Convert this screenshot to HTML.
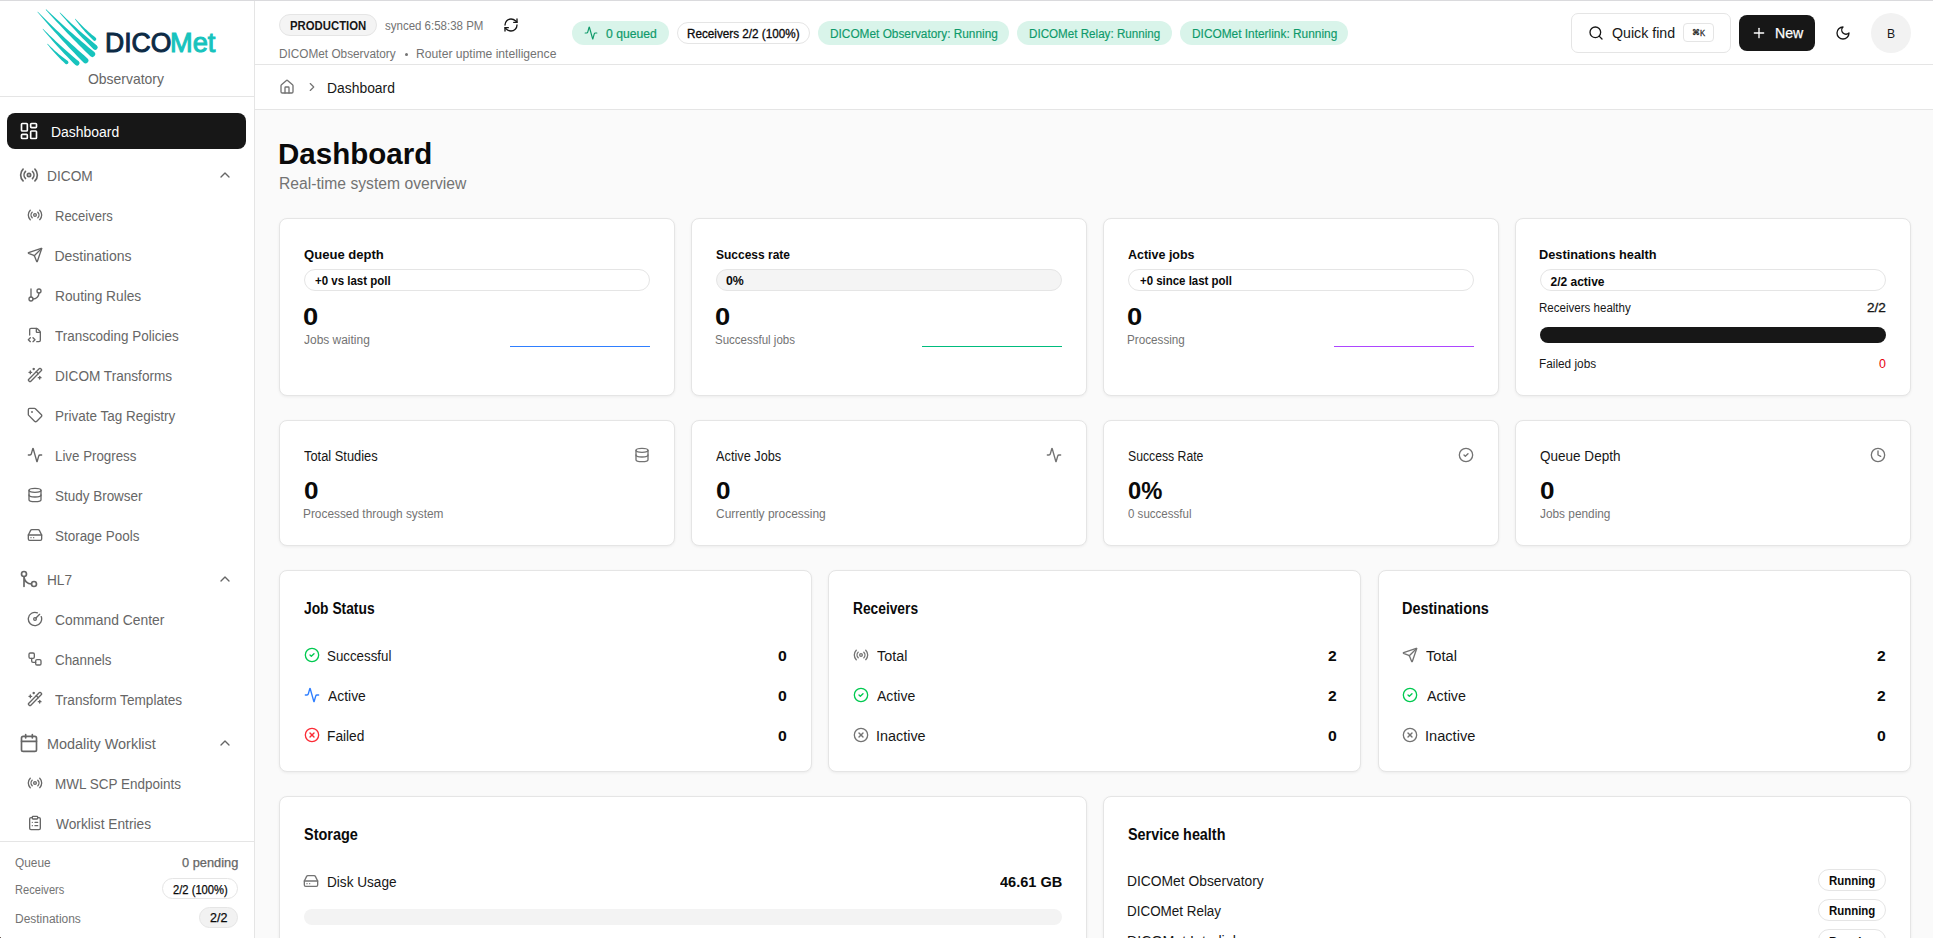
<!DOCTYPE html>
<html><head><meta charset="utf-8"><title>Dashboard</title><style>
*{box-sizing:border-box;margin:0;padding:0}
html,body{width:1933px;height:938px;overflow:hidden}
body{font-family:"Liberation Sans",sans-serif;background:#fafafa;color:#0a0a0a;position:relative}
.t{position:absolute;white-space:nowrap;line-height:1;transform-origin:0 0}
.b{position:absolute}
svg.i{position:absolute;fill:none;stroke:currentColor;stroke-linecap:round;stroke-linejoin:round;display:block}
</style></head><body>
<div class="b" style="left:0px;top:0px;width:255px;height:938px;background:#fff;border-right:1px solid #e5e5e5"></div>
<div class="b" style="left:0px;top:96px;width:254px;height:1px;background:#e5e5e5"></div>
<div class="b" style="left:0px;top:841px;width:254px;height:1px;background:#e5e5e5"></div>
<div class="b" style="left:255px;top:0px;width:1678px;height:65px;background:#fff;border-bottom:1px solid #e5e5e5"></div>
<div class="b" style="left:255px;top:65px;width:1678px;height:45px;background:#fff;border-bottom:1px solid #e5e5e5"></div>
<div class="b" style="left:0px;top:0px;width:1933px;height:1px;background:#dadadd;z-index:5"></div>
<svg style="position:absolute;left:0;top:0" width="110" height="70" viewBox="0 0 110 70"><path fill="#17c3bd" d="M45.72 9.67L48.41 12.69L51.12 15.68L53.84 18.67L56.57 21.65L59.32 24.61L62.08 27.56L64.85 30.49L67.64 33.42L70.45 36.33L73.26 39.23L76.10 42.12L78.94 44.99L81.80 47.85L84.68 50.70L87.57 53.54L90.47 56.36A2.90 2.90 0 0 0 94.33 52.04L94.33 52.04L91.23 49.48L88.13 46.90L85.05 44.31L81.98 41.71L78.93 39.09L75.88 36.46L72.85 33.81L69.83 31.15L66.82 28.47L63.82 25.78L60.83 23.07L57.86 20.35L54.90 17.62L51.94 14.87L49.01 12.11L46.08 9.33ZM37.42 12.07L40.19 15.32L42.98 18.56L45.78 21.78L48.59 24.99L51.42 28.20L54.27 31.39L57.13 34.56L60.00 37.73L62.89 40.88L65.79 44.02L68.71 47.15L71.64 50.26L74.58 53.37L77.54 56.46L80.52 59.54L83.51 62.61A2.90 2.90 0 0 0 87.49 58.39L87.49 58.39L84.29 55.58L81.11 52.76L77.93 49.92L74.77 47.07L71.62 44.20L68.48 41.32L65.36 38.42L62.24 35.52L59.14 32.59L56.06 29.65L52.98 26.70L49.92 23.74L46.86 20.76L43.83 17.76L40.80 14.75L37.78 11.73ZM59.62 12.77L61.63 15.14L63.66 17.49L65.70 19.83L67.75 22.16L69.82 24.48L71.91 26.79L74.00 29.08L76.12 31.36L78.24 33.63L80.39 35.89L82.54 38.13L84.71 40.36L86.90 42.58L89.10 44.79L91.31 46.98L93.54 49.17A2.50 2.50 0 0 0 96.86 45.43L96.86 45.43L94.47 43.48L92.09 41.51L89.72 39.53L87.36 37.53L85.01 35.52L82.68 33.49L80.35 31.45L78.04 29.40L75.74 27.33L73.46 25.24L71.18 23.14L68.92 21.03L66.67 18.90L64.43 16.76L62.20 14.60L59.98 12.43ZM74.91 19.06L75.94 20.48L77.00 21.88L78.07 23.28L79.15 24.66L80.25 26.03L81.36 27.39L82.49 28.74L83.63 30.08L84.79 31.40L85.96 32.72L87.15 34.02L88.35 35.31L89.57 36.59L90.80 37.86L92.05 39.11L93.32 40.36A1.80 1.80 0 0 0 95.68 37.64L95.68 37.64L94.32 36.57L92.97 35.48L91.63 34.38L90.30 33.26L88.98 32.13L87.68 30.99L86.39 29.83L85.11 28.65L83.84 27.47L82.58 26.26L81.34 25.05L80.10 23.81L78.88 22.57L77.67 21.31L76.48 20.03L75.29 18.74ZM42.61 29.07L44.56 31.41L46.51 33.73L48.48 36.05L50.47 38.35L52.47 40.64L54.48 42.92L56.51 45.19L58.55 47.45L60.61 49.69L62.68 51.92L64.77 54.14L66.87 56.35L68.99 58.54L71.12 60.72L73.26 62.89L75.42 65.05A2.50 2.50 0 0 0 78.78 61.35L78.78 61.35L76.45 59.42L74.14 57.47L71.83 55.51L69.54 53.54L67.26 51.55L65.00 49.55L62.74 47.53L60.50 45.50L58.27 43.46L56.05 41.40L53.84 39.32L51.65 37.23L49.46 35.13L47.29 33.01L45.13 30.88L42.99 28.73ZM47.11 43.96L48.16 45.30L49.21 46.62L50.29 47.94L51.38 49.24L52.48 50.53L53.59 51.80L54.73 53.07L55.87 54.32L57.03 55.56L58.21 56.79L59.40 58.00L60.60 59.21L61.82 60.40L63.06 61.58L64.31 62.75L65.57 63.90A1.80 1.80 0 0 0 67.83 61.10L67.83 61.10L66.47 60.12L65.13 59.12L63.79 58.11L62.47 57.09L61.16 56.05L59.86 55.00L58.57 53.93L57.29 52.84L56.03 51.75L54.77 50.63L53.53 49.50L52.30 48.36L51.08 47.20L49.87 46.03L48.67 44.84L47.49 43.64Z"/></svg>
<div class="t" style="left:105.18px;top:30.00px;font-size:27px;color:#0c2a45;transform:scaleX(0.9830);-webkit-text-stroke:1.0px #0c2a45;">DICO</div>
<div class="t" style="left:170.42px;top:30.00px;font-size:27px;color:#17c3bd;transform:scaleX(1.0080);-webkit-text-stroke:1.0px #17c3bd;">Met</div>
<div class="t" style="left:88.17px;top:72.00px;font-size:14.4px;color:#666666;transform:scaleX(0.9693);">Observatory</div>
<div class="b" style="left:7px;top:113px;width:239px;height:36px;background:#171717;border-radius:8px"></div>
<svg class="i" style="left:18.5px;top:121px;color:#fff" width="20" height="20" viewBox="0 0 24 24" stroke-width="2"><rect width="7" height="9" x="3" y="3" rx="1"/><rect width="7" height="5" x="14" y="3" rx="1"/><rect width="7" height="9" x="14" y="12" rx="1"/><rect width="7" height="5" x="3" y="16" rx="1"/></svg>
<div class="t" style="left:50.68px;top:125.00px;font-size:14px;color:#fff;transform:scaleX(0.9965);">Dashboard</div>
<svg class="i" style="left:19px;top:164.8px;color:#666666" width="20" height="20" viewBox="0 0 24 24" stroke-width="2"><path d="M4.9 19.1C1 15.2 1 8.8 4.9 4.9"/><path d="M7.8 16.2c-2.3-2.3-2.3-6.1 0-8.5"/><circle cx="12" cy="12" r="2"/><path d="M16.2 7.8c2.3 2.3 2.3 6.1 0 8.5"/><path d="M19.1 4.9C23 8.8 23 15.1 19.1 19"/></svg>
<div class="t" style="left:46.60px;top:169.00px;font-size:14px;color:#666666;transform:scaleX(0.9802);">DICOM</div>
<svg class="i" style="left:217px;top:167.0px;color:#666666" width="16" height="16" viewBox="0 0 24 24" stroke-width="2"><path d="m18 15-6-6-6 6"/></svg>
<svg class="i" style="left:19px;top:569.0px;color:#666666" width="20" height="20" viewBox="0 0 24 24" stroke-width="2"><circle cx="18" cy="18" r="3"/><circle cx="6" cy="6" r="3"/><path d="M6 21V9a9 9 0 0 0 9 9"/></svg>
<div class="t" style="left:46.61px;top:573.00px;font-size:14px;color:#666666;transform:scaleX(0.9761);">HL7</div>
<svg class="i" style="left:217px;top:571.2px;color:#666666" width="16" height="16" viewBox="0 0 24 24" stroke-width="2"><path d="m18 15-6-6-6 6"/></svg>
<svg class="i" style="left:19px;top:732.9px;color:#666666" width="20" height="20" viewBox="0 0 24 24" stroke-width="2"><path d="M8 2v4"/><path d="M16 2v4"/><rect width="18" height="18" x="3" y="4" rx="2"/><path d="M3 10h18"/></svg>
<div class="t" style="left:46.55px;top:737.00px;font-size:14px;color:#666666;transform:scaleX(1.0307);">Modality Worklist</div>
<svg class="i" style="left:217px;top:735.1px;color:#666666" width="16" height="16" viewBox="0 0 24 24" stroke-width="2"><path d="m18 15-6-6-6 6"/></svg>
<svg class="i" style="left:26.8px;top:206.89999999999998px;color:#666666" width="16" height="16" viewBox="0 0 24 24" stroke-width="2"><path d="M4.9 19.1C1 15.2 1 8.8 4.9 4.9"/><path d="M7.8 16.2c-2.3-2.3-2.3-6.1 0-8.5"/><circle cx="12" cy="12" r="2"/><path d="M16.2 7.8c2.3 2.3 2.3 6.1 0 8.5"/><path d="M19.1 4.9C23 8.8 23 15.1 19.1 19"/></svg>
<div class="t" style="left:54.56px;top:209.00px;font-size:14px;color:#666666;transform:scaleX(0.9287);">Receivers</div>
<svg class="i" style="left:26.8px;top:246.89999999999998px;color:#666666" width="16" height="16" viewBox="0 0 24 24" stroke-width="2"><path d="M14.536 21.686a.5.5 0 0 0 .937-.024l6.5-19a.496.496 0 0 0-.635-.635l-19 6.5a.5.5 0 0 0-.024.937l7.93 3.18a2 2 0 0 1 1.112 1.11z"/><path d="m21.854 2.147-10.94 10.939"/></svg>
<div class="t" style="left:54.48px;top:249.00px;font-size:14px;color:#666666;">Destinations</div>
<svg class="i" style="left:26.8px;top:286.9px;color:#666666" width="16" height="16" viewBox="0 0 24 24" stroke-width="2"><line x1="6" x2="6" y1="3" y2="15"/><circle cx="18" cy="6" r="3"/><circle cx="6" cy="18" r="3"/><path d="M18 9a9 9 0 0 1-9 9"/></svg>
<div class="t" style="left:54.50px;top:289.00px;font-size:14px;color:#666666;transform:scaleX(0.9802);">Routing Rules</div>
<svg class="i" style="left:26.8px;top:326.9px;color:#666666" width="16" height="16" viewBox="0 0 24 24" stroke-width="2"><path d="M4 12.15V4a2 2 0 0 1 2-2h8a2.4 2.4 0 0 1 1.706.706l3.588 3.588A2.4 2.4 0 0 1 20 8v12a2 2 0 0 1-2 2h-3.35"/><path d="M14 2v5a1 1 0 0 0 1 1h5"/><path d="m5 16-3 3 3 3"/><path d="m9 22 3-3-3-3"/></svg>
<div class="t" style="left:55.33px;top:329.00px;font-size:14px;color:#666666;transform:scaleX(0.9610);">Transcoding Policies</div>
<svg class="i" style="left:26.8px;top:366.9px;color:#666666" width="16" height="16" viewBox="0 0 24 24" stroke-width="2"><path d="m21.64 3.64-1.28-1.28a1.21 1.21 0 0 0-1.72 0L2.36 18.64a1.21 1.21 0 0 0 0 1.72l1.28 1.28a1.2 1.2 0 0 0 1.72 0L21.64 5.36a1.2 1.2 0 0 0 0-1.72"/><path d="m14 7 3 3"/><path d="M5 6v4"/><path d="M19 14v4"/><path d="M10 2v2"/><path d="M7 8H3"/><path d="M21 16h-4"/><path d="M11 3H9"/></svg>
<div class="t" style="left:54.51px;top:369.00px;font-size:14px;color:#666666;transform:scaleX(0.9712);">DICOM Transforms</div>
<svg class="i" style="left:26.8px;top:406.9px;color:#666666" width="16" height="16" viewBox="0 0 24 24" stroke-width="2"><path d="M12.586 2.586A2 2 0 0 0 11.172 2H4a2 2 0 0 0-2 2v7.172a2 2 0 0 0 .586 1.414l8.704 8.704a2.426 2.426 0 0 0 3.42 0l6.58-6.58a2.426 2.426 0 0 0 0-3.42z"/><circle cx="7.5" cy="7.5" r=".5" fill="currentColor"/></svg>
<div class="t" style="left:54.52px;top:409.00px;font-size:14px;color:#666666;transform:scaleX(0.9626);">Private Tag Registry</div>
<svg class="i" style="left:26.8px;top:446.9px;color:#666666" width="16" height="16" viewBox="0 0 24 24" stroke-width="2"><path d="M22 12h-2.48a2 2 0 0 0-1.93 1.46l-2.35 8.36a.25.25 0 0 1-.48 0L9.24 2.18a.25.25 0 0 0-.48 0l-2.35 8.36A2 2 0 0 1 4.49 12H2"/></svg>
<div class="t" style="left:54.53px;top:449.00px;font-size:14px;color:#666666;transform:scaleX(0.9512);">Live Progress</div>
<svg class="i" style="left:26.8px;top:486.9px;color:#666666" width="16" height="16" viewBox="0 0 24 24" stroke-width="2"><ellipse cx="12" cy="5" rx="9" ry="3"/><path d="M3 5V19A9 3 0 0 0 21 19V5"/><path d="M3 12A9 3 0 0 0 21 12"/></svg>
<div class="t" style="left:54.99px;top:489.00px;font-size:14px;color:#666666;transform:scaleX(0.9616);">Study Browser</div>
<svg class="i" style="left:26.8px;top:526.9000000000001px;color:#666666" width="16" height="16" viewBox="0 0 24 24" stroke-width="2"><line x1="22" x2="2" y1="12" y2="12"/><path d="M5.45 5.11 2 12v6a2 2 0 0 0 2 2h16a2 2 0 0 0 2-2v-6l-3.45-6.89A2 2 0 0 0 16.76 4H7.24a2 2 0 0 0-1.79 1.11z"/><line x1="6" x2="6.01" y1="16" y2="16"/><line x1="10" x2="10.01" y1="16" y2="16"/></svg>
<div class="t" style="left:55.00px;top:529.00px;font-size:14px;color:#666666;transform:scaleX(0.9597);">Storage Pools</div>
<svg class="i" style="left:26.8px;top:611.0px;color:#666666" width="16" height="16" viewBox="0 0 24 24" stroke-width="2"><path d="M15.6 2.7a10 10 0 1 0 5.7 5.7"/><circle cx="12" cy="12" r="2"/><path d="M13.4 10.6 19 5"/></svg>
<div class="t" style="left:54.91px;top:613.00px;font-size:14px;color:#666666;transform:scaleX(0.9895);">Command Center</div>
<svg class="i" style="left:26.8px;top:651.0px;color:#666666" width="16" height="16" viewBox="0 0 24 24" stroke-width="2"><rect width="8" height="8" x="3" y="3" rx="2"/><path d="M7 11v4a2 2 0 0 0 2 2h4"/><rect width="8" height="8" x="13" y="13" rx="2"/></svg>
<div class="t" style="left:54.93px;top:653.00px;font-size:14px;color:#666666;transform:scaleX(0.9558);">Channels</div>
<svg class="i" style="left:26.8px;top:691.0px;color:#666666" width="16" height="16" viewBox="0 0 24 24" stroke-width="2"><path d="m21.64 3.64-1.28-1.28a1.21 1.21 0 0 0-1.72 0L2.36 18.64a1.21 1.21 0 0 0 0 1.72l1.28 1.28a1.2 1.2 0 0 0 1.72 0L21.64 5.36a1.2 1.2 0 0 0 0-1.72"/><path d="m14 7 3 3"/><path d="M5 6v4"/><path d="M19 14v4"/><path d="M10 2v2"/><path d="M7 8H3"/><path d="M21 16h-4"/><path d="M11 3H9"/></svg>
<div class="t" style="left:55.33px;top:693.00px;font-size:14px;color:#666666;transform:scaleX(0.9729);">Transform Templates</div>
<svg class="i" style="left:26.8px;top:774.9000000000001px;color:#666666" width="16" height="16" viewBox="0 0 24 24" stroke-width="2"><path d="M4.9 19.1C1 15.2 1 8.8 4.9 4.9"/><path d="M7.8 16.2c-2.3-2.3-2.3-6.1 0-8.5"/><circle cx="12" cy="12" r="2"/><path d="M16.2 7.8c2.3 2.3 2.3 6.1 0 8.5"/><path d="M19.1 4.9C23 8.8 23 15.1 19.1 19"/></svg>
<div class="t" style="left:54.52px;top:777.00px;font-size:14px;color:#666666;transform:scaleX(0.9632);">MWL SCP Endpoints</div>
<svg class="i" style="left:26.8px;top:814.8000000000001px;color:#666666" width="16" height="16" viewBox="0 0 24 24" stroke-width="2"><rect width="8" height="4" x="8" y="2" rx="1" ry="1"/><path d="M16 4h2a2 2 0 0 1 2 2v14a2 2 0 0 1-2 2H6a2 2 0 0 1-2-2V6a2 2 0 0 1 2-2h2"/><path d="M12 11h4"/><path d="M12 16h4"/><path d="M8 11h.01"/><path d="M8 16h.01"/></svg>
<div class="t" style="left:55.53px;top:817.00px;font-size:14px;color:#666666;transform:scaleX(0.9794);">Worklist Entries</div>
<div class="t" style="left:14.97px;top:857.00px;font-size:12px;color:#737373;transform:scaleX(0.9880);">Queue</div>
<div class="t" style="left:182.19px;top:857.00px;font-size:12px;color:#666666;transform:scaleX(1.0677);-webkit-text-stroke:0.25px #666666;">0 pending</div>
<div class="t" style="left:14.61px;top:884.00px;font-size:12px;color:#737373;transform:scaleX(0.9238);">Receivers</div>
<div class="b" style="left:162px;top:878px;width:76px;height:21px;border:1px solid #e5e5e5;border-radius:999px;background:#fff"></div>
<div class="t" style="left:172.64px;top:884.00px;font-size:12px;color:#0a0a0a;transform:scaleX(0.9327);-webkit-text-stroke:0.25px #0a0a0a;">2/2 (100%)</div>
<div class="t" style="left:14.54px;top:913.00px;font-size:12px;color:#737373;transform:scaleX(0.9972);">Destinations</div>
<div class="b" style="left:199px;top:907px;width:39px;height:21px;border:1px solid #e5e5e5;border-radius:999px;background:#f2f2f2"></div>
<div class="t" style="left:209.58px;top:912.00px;font-size:12px;color:#0a0a0a;transform:scaleX(1.0401);-webkit-text-stroke:0.25px #0a0a0a;">2/2</div>
<div class="b" style="left:279px;top:14px;width:98px;height:22px;background:#f4f4f4;border:1px solid #e5e5e5;border-radius:999px"></div>
<div class="t" style="left:289.86px;top:20.00px;font-size:12px;color:#171717;font-weight:bold;transform:scaleX(0.9459);">PRODUCTION</div>
<div class="t" style="left:385.46px;top:20.00px;font-size:12px;color:#737373;transform:scaleX(0.9576);">synced 6:58:38 PM</div>
<svg class="i" style="left:503.4px;top:16.7px;color:#171717" width="16" height="16" viewBox="0 0 24 24" stroke-width="2"><path d="M3 12a9 9 0 0 1 9-9 9.75 9.75 0 0 1 6.74 2.74L21 8"/><path d="M21 3v5h-5"/><path d="M21 12a9 9 0 0 1-9 9 9.75 9.75 0 0 1-6.74-2.74L3 16"/><path d="M8 16H3v5"/></svg>
<div class="t" style="left:278.76px;top:48.00px;font-size:12px;color:#737373;transform:scaleX(0.9825);">DICOMet Observatory</div>
<div class="b" style="left:405px;top:52.7px;width:3.2px;height:3.2px;background:#737373;border-radius:50%"></div>
<div class="t" style="left:416.13px;top:48.00px;font-size:12px;color:#737373;transform:scaleX(1.0122);">Router uptime intelligence</div>
<div class="b" style="left:572px;top:21px;width:97px;height:24px;background:#d9f4ea;border-radius:999px"></div>
<svg class="i" style="left:583.5px;top:26px;color:#0f9a6a" width="14" height="14" viewBox="0 0 24 24" stroke-width="2"><path d="M22 12h-2.48a2 2 0 0 0-1.93 1.46l-2.35 8.36a.25.25 0 0 1-.48 0L9.24 2.18a.25.25 0 0 0-.48 0l-2.35 8.36A2 2 0 0 1 4.49 12H2"/></svg>
<div class="t" style="left:606.31px;top:28.00px;font-size:12px;color:#0f9a6a;transform:scaleX(1.0127);-webkit-text-stroke:0.2px #0f9a6a;">0 queued</div>
<div class="b" style="left:677px;top:22px;width:133px;height:22px;background:#fff;border:1px solid #e5e5e5;border-radius:999px"></div>
<div class="t" style="left:686.86px;top:28.00px;font-size:12px;color:#0a0a0a;transform:scaleX(0.9759);-webkit-text-stroke:0.3px #0a0a0a;">Receivers 2/2 (100%)</div>
<div class="b" style="left:818px;top:21px;width:191px;height:24px;background:#d9f4ea;border-radius:999px"></div>
<div class="t" style="left:830.05px;top:28.00px;font-size:12px;color:#0f9a6a;transform:scaleX(0.9869);-webkit-text-stroke:0.15px #0f9a6a;">DICOMet Observatory: Running</div>
<div class="b" style="left:1017.3px;top:21px;width:154.4000000000001px;height:24px;background:#d9f4ea;border-radius:999px"></div>
<div class="t" style="left:1029.37px;top:28.00px;font-size:12px;color:#0f9a6a;transform:scaleX(0.9692);-webkit-text-stroke:0.15px #0f9a6a;">DICOMet Relay: Running</div>
<div class="b" style="left:1180px;top:21px;width:168.4000000000001px;height:24px;background:#d9f4ea;border-radius:999px"></div>
<div class="t" style="left:1192.05px;top:28.00px;font-size:12px;color:#0f9a6a;transform:scaleX(0.9899);-webkit-text-stroke:0.15px #0f9a6a;">DICOMet Interlink: Running</div>
<div class="b" style="left:1571px;top:13px;width:160px;height:40px;background:#fff;border:1px solid #e5e5e5;border-radius:7px"></div>
<svg class="i" style="left:1587.9px;top:24.8px;color:#171717" width="16" height="16" viewBox="0 0 24 24" stroke-width="2"><circle cx="11" cy="11" r="8"/><path d="m21 21-4.3-4.3"/></svg>
<div class="t" style="left:1611.96px;top:26.00px;font-size:14px;color:#171717;transform:scaleX(1.0133);">Quick find</div>
<div class="b" style="left:1683px;top:23px;width:31px;height:19px;background:#fff;border:1px solid #e5e5e5;border-radius:4px"></div>
<div class="t" style="left:1692.3px;top:28.6px;font-size:7.6px;color:#262626;font-weight:bold">⌘</div>
<div class="t" style="left:1700.19px;top:28.00px;font-size:9.5px;color:#262626;transform:scaleX(0.8055);-webkit-text-stroke:0.3px #262626;">K</div>
<div class="b" style="left:1739px;top:15px;width:76px;height:36px;background:#171717;border-radius:8px"></div>
<svg class="i" style="left:1750.9px;top:25px;color:#fff" width="16" height="16" viewBox="0 0 24 24" stroke-width="2"><path d="M5 12h14"/><path d="M12 5v14"/></svg>
<div class="t" style="left:1774.67px;top:26.00px;font-size:14px;color:#fff;transform:scaleX(1.0093);-webkit-text-stroke:0.25px #fff;">New</div>
<svg class="i" style="left:1834.7px;top:25px;color:#171717" width="16" height="16" viewBox="0 0 24 24" stroke-width="2"><path d="M12 3a6 6 0 0 0 9 9 9 9 0 1 1-9-9Z"/></svg>
<div class="b" style="left:1871px;top:13px;width:40px;height:40px;background:#f2f2f2;border-radius:50%"></div>
<div class="t" style="left:1886.73px;top:27.00px;font-size:13.5px;color:#171717;transform:scaleX(0.9000);">B</div>
<svg class="i" style="left:279.2px;top:78.9px;color:#737373" width="16" height="16" viewBox="0 0 24 24" stroke-width="2"><path d="M15 21v-8a1 1 0 0 0-1-1h-4a1 1 0 0 0-1 1v8"/><path d="M3 10a2 2 0 0 1 .709-1.528l7-5.999a2 2 0 0 1 2.582 0l7 5.999A2 2 0 0 1 21 10v9a2 2 0 0 1-2 2H5a2 2 0 0 1-2-2z"/></svg>
<svg class="i" style="left:304.6px;top:80.2px;color:#737373" width="14" height="14" viewBox="0 0 24 24" stroke-width="2"><path d="m9 18 6-6-6-6"/></svg>
<div class="t" style="left:326.69px;top:81.00px;font-size:14px;color:#171717;transform:scaleX(0.9920);">Dashboard</div>
<div class="t" style="left:278.38px;top:139.00px;font-size:30px;color:#0a0a0a;font-weight:bold;transform:scaleX(0.9843);">Dashboard</div>
<div class="t" style="left:278.75px;top:176.00px;font-size:16px;color:#737373;transform:scaleX(0.9799);">Real-time system overview</div>
<div class="b" style="left:279px;top:218px;width:396px;height:178px;background:#fff;border:1px solid #e5e5e5;border-radius:8px;box-shadow:0 1px 3px rgba(0,0,0,.06)"></div>
<div class="b" style="left:691px;top:218px;width:396px;height:178px;background:#fff;border:1px solid #e5e5e5;border-radius:8px;box-shadow:0 1px 3px rgba(0,0,0,.06)"></div>
<div class="b" style="left:1103px;top:218px;width:396px;height:178px;background:#fff;border:1px solid #e5e5e5;border-radius:8px;box-shadow:0 1px 3px rgba(0,0,0,.06)"></div>
<div class="b" style="left:1515px;top:218px;width:396px;height:178px;background:#fff;border:1px solid #e5e5e5;border-radius:8px;box-shadow:0 1px 3px rgba(0,0,0,.06)"></div>
<div class="t" style="left:303.88px;top:248.00px;font-size:13.5px;color:#0a0a0a;font-weight:bold;transform:scaleX(0.9675);">Queue depth</div>
<div class="b" style="left:304px;top:269px;width:346px;height:22px;border:1px solid #e5e5e5;border-radius:999px;background:#fff"></div>
<div class="t" style="left:315.44px;top:275.00px;font-size:12px;color:#0a0a0a;font-weight:bold;transform:scaleX(0.9562);">+0 vs last poll</div>
<div class="t" style="left:303.31px;top:305.00px;font-size:24px;color:#0a0a0a;font-weight:bold;transform:scaleX(1.1404);">0</div>
<div class="t" style="left:303.92px;top:334.00px;font-size:12px;color:#737373;transform:scaleX(0.9963);">Jobs waiting</div>
<div class="b" style="left:510px;top:345.5px;width:140px;height:1.5px;background:#2f7fff"></div>
<div class="t" style="left:715.64px;top:248.00px;font-size:13.5px;color:#0a0a0a;font-weight:bold;transform:scaleX(0.8882);">Success rate</div>
<div class="b" style="left:716px;top:269px;width:346px;height:22px;border:1px solid #e5e5e5;border-radius:999px;background:#f4f4f4"></div>
<div class="t" style="left:726.21px;top:275.00px;font-size:12px;color:#0a0a0a;font-weight:bold;transform:scaleX(1.0266);">0%</div>
<div class="t" style="left:715.31px;top:305.00px;font-size:24px;color:#0a0a0a;font-weight:bold;transform:scaleX(1.1404);">0</div>
<div class="t" style="left:715.48px;top:334.00px;font-size:12px;color:#737373;transform:scaleX(0.9595);">Successful jobs</div>
<div class="b" style="left:922px;top:345.5px;width:140px;height:1.5px;background:#00bc7d"></div>
<div class="t" style="left:1127.89px;top:248.00px;font-size:13.5px;color:#0a0a0a;font-weight:bold;transform:scaleX(0.9235);">Active jobs</div>
<div class="b" style="left:1128px;top:269px;width:346px;height:22px;border:1px solid #e5e5e5;border-radius:999px;background:#fff"></div>
<div class="t" style="left:1139.74px;top:275.00px;font-size:12px;color:#0a0a0a;font-weight:bold;transform:scaleX(0.9533);">+0 since last poll</div>
<div class="t" style="left:1127.31px;top:305.00px;font-size:24px;color:#0a0a0a;font-weight:bold;transform:scaleX(1.1404);">0</div>
<div class="t" style="left:1127.27px;top:334.00px;font-size:12px;color:#737373;transform:scaleX(0.9740);">Processing</div>
<div class="b" style="left:1334px;top:345.5px;width:140px;height:1.5px;background:#ad46ff"></div>
<div class="t" style="left:1539.37px;top:248.00px;font-size:13.5px;color:#0a0a0a;font-weight:bold;transform:scaleX(0.9442);">Destinations health</div>
<div class="b" style="left:1540px;top:269px;width:346px;height:22px;border:1px solid #e5e5e5;border-radius:999px;background:#fff"></div>
<div class="t" style="left:1550.48px;top:276.00px;font-size:12px;color:#0a0a0a;font-weight:bold;">2/2 active</div>
<div class="t" style="left:1539.28px;top:302.00px;font-size:12px;color:#171717;transform:scaleX(0.9621);">Receivers healthy</div>
<div class="t" style="left:1867.12px;top:302.00px;font-size:12px;color:#171717;transform:scaleX(1.1305);-webkit-text-stroke:0.3px #171717;">2/2</div>
<div class="b" style="left:1540px;top:327px;width:346px;height:16px;background:#171717;border-radius:999px"></div>
<div class="t" style="left:1539.25px;top:358.00px;font-size:12px;color:#171717;transform:scaleX(0.9852);">Failed jobs</div>
<div class="t" style="left:1878.90px;top:358.00px;font-size:12px;color:#e7000b;transform:scaleX(1.0351);">0</div>
<div class="b" style="left:279px;top:420px;width:396px;height:126px;background:#fff;border:1px solid #e5e5e5;border-radius:8px;box-shadow:0 1px 3px rgba(0,0,0,.06)"></div>
<div class="b" style="left:691px;top:420px;width:396px;height:126px;background:#fff;border:1px solid #e5e5e5;border-radius:8px;box-shadow:0 1px 3px rgba(0,0,0,.06)"></div>
<div class="b" style="left:1103px;top:420px;width:396px;height:126px;background:#fff;border:1px solid #e5e5e5;border-radius:8px;box-shadow:0 1px 3px rgba(0,0,0,.06)"></div>
<div class="b" style="left:1515px;top:420px;width:396px;height:126px;background:#fff;border:1px solid #e5e5e5;border-radius:8px;box-shadow:0 1px 3px rgba(0,0,0,.06)"></div>
<div class="t" style="left:304.04px;top:449.00px;font-size:14px;color:#171717;transform:scaleX(0.9196);">Total Studies</div>
<svg class="i" style="left:634px;top:446.5px;color:#737373" width="16" height="16" viewBox="0 0 24 24" stroke-width="2"><ellipse cx="12" cy="5" rx="9" ry="3"/><path d="M3 5V19A9 3 0 0 0 21 19V5"/><path d="M3 12A9 3 0 0 0 21 12"/></svg>
<div class="t" style="left:303.76px;top:479.00px;font-size:24px;color:#0a0a0a;font-weight:bold;transform:scaleX(1.0877);">0</div>
<div class="t" style="left:303.35px;top:508.00px;font-size:12px;color:#737373;transform:scaleX(0.9887);">Processed through system</div>
<div class="t" style="left:716.24px;top:449.00px;font-size:14px;color:#171717;transform:scaleX(0.9106);">Active Jobs</div>
<svg class="i" style="left:1046px;top:446.5px;color:#737373" width="16" height="16" viewBox="0 0 24 24" stroke-width="2"><path d="M22 12h-2.48a2 2 0 0 0-1.93 1.46l-2.35 8.36a.25.25 0 0 1-.48 0L9.24 2.18a.25.25 0 0 0-.48 0l-2.35 8.36A2 2 0 0 1 4.49 12H2"/></svg>
<div class="t" style="left:715.76px;top:479.00px;font-size:24px;color:#0a0a0a;font-weight:bold;transform:scaleX(1.0877);">0</div>
<div class="t" style="left:715.70px;top:508.00px;font-size:12px;color:#737373;transform:scaleX(0.9976);">Currently processing</div>
<div class="t" style="left:1127.75px;top:449.00px;font-size:14px;color:#171717;transform:scaleX(0.8729);">Success Rate</div>
<svg class="i" style="left:1458px;top:446.5px;color:#737373" width="16" height="16" viewBox="0 0 24 24" stroke-width="2"><circle cx="12" cy="12" r="10"/><path d="m9 12 2 2 4-4"/></svg>
<div class="t" style="left:1127.85px;top:479.00px;font-size:24px;color:#0a0a0a;font-weight:bold;transform:scaleX(0.9903);">0%</div>
<div class="t" style="left:1127.84px;top:508.00px;font-size:12px;color:#737373;transform:scaleX(0.9608);">0 successful</div>
<div class="t" style="left:1539.69px;top:449.00px;font-size:14px;color:#171717;transform:scaleX(0.9662);">Queue Depth</div>
<svg class="i" style="left:1870px;top:446.5px;color:#737373" width="16" height="16" viewBox="0 0 24 24" stroke-width="2"><circle cx="12" cy="12" r="10"/><polyline points="12 6 12 12 16 14"/></svg>
<div class="t" style="left:1539.76px;top:479.00px;font-size:24px;color:#0a0a0a;font-weight:bold;transform:scaleX(1.0877);">0</div>
<div class="t" style="left:1540.12px;top:508.00px;font-size:12px;color:#737373;transform:scaleX(0.9867);">Jobs pending</div>
<div class="b" style="left:279px;top:570px;width:533px;height:202px;background:#fff;border:1px solid #e5e5e5;border-radius:8px;box-shadow:0 1px 3px rgba(0,0,0,.06)"></div>
<div class="b" style="left:828.33px;top:570px;width:533px;height:202px;background:#fff;border:1px solid #e5e5e5;border-radius:8px;box-shadow:0 1px 3px rgba(0,0,0,.06)"></div>
<div class="b" style="left:1377.67px;top:570px;width:533px;height:202px;background:#fff;border:1px solid #e5e5e5;border-radius:8px;box-shadow:0 1px 3px rgba(0,0,0,.06)"></div>
<div class="t" style="left:304.29px;top:601.00px;font-size:16px;color:#0a0a0a;font-weight:bold;transform:scaleX(0.8630);">Job Status</div>
<svg class="i" style="left:303.5px;top:647.1999999999999px;color:#00c950" width="16" height="16" viewBox="0 0 24 24" stroke-width="2"><circle cx="12" cy="12" r="10"/><path d="m9 12 2 2 4-4"/></svg>
<div class="t" style="left:327.30px;top:649.00px;font-size:14px;color:#171717;transform:scaleX(0.9509);">Successful</div>
<div class="t" style="left:778.37px;top:649.00px;font-size:14px;color:#0a0a0a;font-weight:bold;transform:scaleX(1.1278);">0</div>
<svg class="i" style="left:303.5px;top:687.1999999999999px;color:#2f7fff" width="16" height="16" viewBox="0 0 24 24" stroke-width="2"><path d="M22 12h-2.48a2 2 0 0 0-1.93 1.46l-2.35 8.36a.25.25 0 0 1-.48 0L9.24 2.18a.25.25 0 0 0-.48 0l-2.35 8.36A2 2 0 0 1 4.49 12H2"/></svg>
<div class="t" style="left:327.83px;top:689.00px;font-size:14px;color:#171717;transform:scaleX(0.9925);">Active</div>
<div class="t" style="left:778.37px;top:689.00px;font-size:14px;color:#0a0a0a;font-weight:bold;transform:scaleX(1.1278);">0</div>
<svg class="i" style="left:303.5px;top:727.1999999999999px;color:#fb2c36" width="16" height="16" viewBox="0 0 24 24" stroke-width="2"><circle cx="12" cy="12" r="10"/><path d="m15 9-6 6"/><path d="m9 9 6 6"/></svg>
<div class="t" style="left:326.80px;top:729.00px;font-size:14px;color:#171717;transform:scaleX(0.9801);">Failed</div>
<div class="t" style="left:778.37px;top:729.00px;font-size:14px;color:#0a0a0a;font-weight:bold;transform:scaleX(1.1278);">0</div>
<div class="t" style="left:852.94px;top:601.00px;font-size:16px;color:#0a0a0a;font-weight:bold;transform:scaleX(0.8600);">Receivers</div>
<svg class="i" style="left:852.83px;top:647.1999999999999px;color:#737373" width="16" height="16" viewBox="0 0 24 24" stroke-width="2"><path d="M4.9 19.1C1 15.2 1 8.8 4.9 4.9"/><path d="M7.8 16.2c-2.3-2.3-2.3-6.1 0-8.5"/><circle cx="12" cy="12" r="2"/><path d="M16.2 7.8c2.3 2.3 2.3 6.1 0 8.5"/><path d="M19.1 4.9C23 8.8 23 15.1 19.1 19"/></svg>
<div class="t" style="left:876.94px;top:649.00px;font-size:14px;color:#171717;transform:scaleX(1.0254);">Total</div>
<div class="t" style="left:1327.78px;top:649.00px;font-size:14px;color:#0a0a0a;font-weight:bold;transform:scaleX(1.1161);">2</div>
<svg class="i" style="left:852.83px;top:687.1999999999999px;color:#00c950" width="16" height="16" viewBox="0 0 24 24" stroke-width="2"><circle cx="12" cy="12" r="10"/><path d="m9 12 2 2 4-4"/></svg>
<div class="t" style="left:877.16px;top:689.00px;font-size:14px;color:#171717;transform:scaleX(1.0024);">Active</div>
<div class="t" style="left:1327.78px;top:689.00px;font-size:14px;color:#0a0a0a;font-weight:bold;transform:scaleX(1.1161);">2</div>
<svg class="i" style="left:852.83px;top:727.1999999999999px;color:#737373" width="16" height="16" viewBox="0 0 24 24" stroke-width="2"><circle cx="12" cy="12" r="10"/><path d="m15 9-6 6"/><path d="m9 9 6 6"/></svg>
<div class="t" style="left:875.93px;top:729.00px;font-size:14px;color:#171717;transform:scaleX(1.0287);">Inactive</div>
<div class="t" style="left:1327.70px;top:729.00px;font-size:14px;color:#0a0a0a;font-weight:bold;transform:scaleX(1.1278);">0</div>
<div class="t" style="left:1402.23px;top:601.00px;font-size:16px;color:#0a0a0a;font-weight:bold;transform:scaleX(0.9047);">Destinations</div>
<svg class="i" style="left:1402.17px;top:647.1999999999999px;color:#737373" width="16" height="16" viewBox="0 0 24 24" stroke-width="2"><path d="M14.536 21.686a.5.5 0 0 0 .937-.024l6.5-19a.496.496 0 0 0-.635-.635l-19 6.5a.5.5 0 0 0-.024.937l7.93 3.18a2 2 0 0 1 1.112 1.11z"/><path d="m21.854 2.147-10.94 10.939"/></svg>
<div class="t" style="left:1426.28px;top:649.00px;font-size:14px;color:#171717;transform:scaleX(1.0487);">Total</div>
<div class="t" style="left:1877.12px;top:649.00px;font-size:14px;color:#0a0a0a;font-weight:bold;transform:scaleX(1.1161);">2</div>
<svg class="i" style="left:1402.17px;top:687.1999999999999px;color:#00c950" width="16" height="16" viewBox="0 0 24 24" stroke-width="2"><circle cx="12" cy="12" r="10"/><path d="m9 12 2 2 4-4"/></svg>
<div class="t" style="left:1426.50px;top:689.00px;font-size:14px;color:#171717;transform:scaleX(1.0201);">Active</div>
<div class="t" style="left:1877.12px;top:689.00px;font-size:14px;color:#0a0a0a;font-weight:bold;transform:scaleX(1.1161);">2</div>
<svg class="i" style="left:1402.17px;top:727.1999999999999px;color:#737373" width="16" height="16" viewBox="0 0 24 24" stroke-width="2"><circle cx="12" cy="12" r="10"/><path d="m15 9-6 6"/><path d="m9 9 6 6"/></svg>
<div class="t" style="left:1425.26px;top:729.00px;font-size:14px;color:#171717;transform:scaleX(1.0429);">Inactive</div>
<div class="t" style="left:1877.04px;top:729.00px;font-size:14px;color:#0a0a0a;font-weight:bold;transform:scaleX(1.1278);">0</div>
<div class="b" style="left:279px;top:796px;width:808px;height:200px;background:#fff;border:1px solid #e5e5e5;border-radius:8px;box-shadow:0 1px 3px rgba(0,0,0,.06)"></div>
<div class="b" style="left:1103px;top:796px;width:808px;height:200px;background:#fff;border:1px solid #e5e5e5;border-radius:8px;box-shadow:0 1px 3px rgba(0,0,0,.06)"></div>
<div class="t" style="left:303.87px;top:827.00px;font-size:16px;color:#0a0a0a;font-weight:bold;transform:scaleX(0.9046);">Storage</div>
<svg class="i" style="left:303px;top:873px;color:#737373" width="16" height="16" viewBox="0 0 24 24" stroke-width="2"><line x1="22" x2="2" y1="12" y2="12"/><path d="M5.45 5.11 2 12v6a2 2 0 0 0 2 2h16a2 2 0 0 0 2-2v-6l-3.45-6.89A2 2 0 0 0 16.76 4H7.24a2 2 0 0 0-1.79 1.11z"/><line x1="6" x2="6.01" y1="16" y2="16"/><line x1="10" x2="10.01" y1="16" y2="16"/></svg>
<div class="t" style="left:326.91px;top:875.00px;font-size:14px;color:#171717;transform:scaleX(0.9715);">Disk Usage</div>
<div class="t" style="left:999.68px;top:874.00px;font-size:15px;color:#0a0a0a;font-weight:bold;transform:scaleX(0.9700);">46.61 GB</div>
<div class="b" style="left:304px;top:909px;width:758px;height:16px;background:#f3f3f3;border-radius:999px"></div>
<div class="t" style="left:1127.57px;top:827.00px;font-size:16px;color:#0a0a0a;font-weight:bold;transform:scaleX(0.8978);">Service health</div>
<div class="t" style="left:1127.29px;top:874.00px;font-size:14px;color:#171717;transform:scaleX(0.9878);">DICOMet Observatory</div>
<div class="b" style="left:1817.5px;top:869px;width:68px;height:22px;border:1px solid #e5e5e5;border-radius:999px;background:#fff"></div>
<div class="t" style="left:1829.06px;top:875.00px;font-size:12px;color:#0a0a0a;font-weight:bold;transform:scaleX(0.9512);">Running</div>
<div class="t" style="left:1127.33px;top:904.00px;font-size:14px;color:#171717;transform:scaleX(0.9596);">DICOMet Relay</div>
<div class="b" style="left:1817.5px;top:899px;width:68px;height:22px;border:1px solid #e5e5e5;border-radius:999px;background:#fff"></div>
<div class="t" style="left:1829.06px;top:905.00px;font-size:12px;color:#0a0a0a;font-weight:bold;transform:scaleX(0.9512);">Running</div>
<div class="t" style="left:1127.26px;top:934.00px;font-size:14px;color:#171717;transform:scaleX(1.0135);">DICOMet Interlink</div>
<div class="b" style="left:1817.5px;top:929px;width:68px;height:22px;border:1px solid #e5e5e5;border-radius:999px;background:#fff"></div>
<div class="t" style="left:1829.06px;top:936.00px;font-size:12px;color:#0a0a0a;font-weight:bold;transform:scaleX(0.9512);">Running</div>
<div class="b" style="left:0px;top:937px;width:1px;height:1px;background:#6b5d55"></div>
</body></html>
